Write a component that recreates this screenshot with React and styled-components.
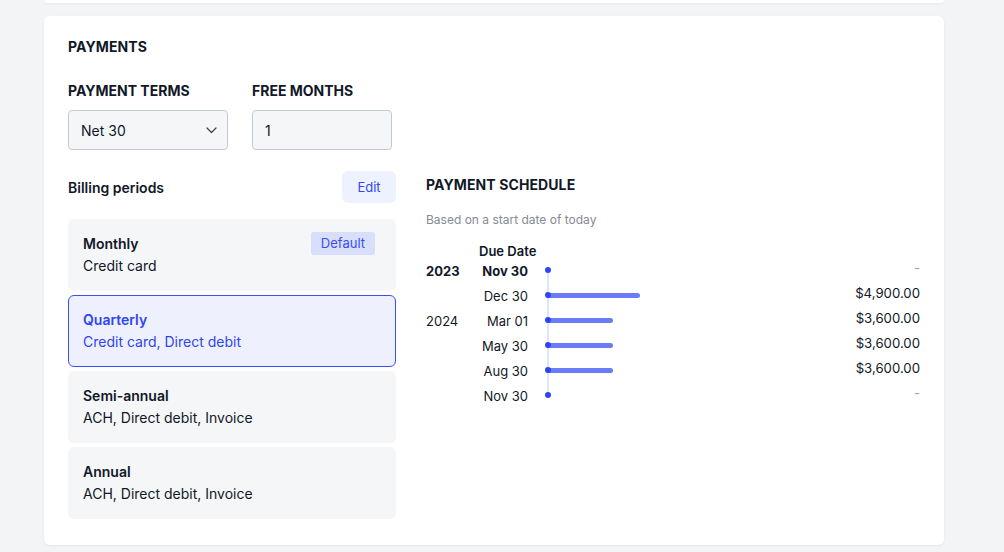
import React from 'react';
import styled, { createGlobalStyle } from 'styled-components';

const periods = [
  { name: 'Monthly', methods: 'Credit card', isDefault: true },
  { name: 'Quarterly', methods: 'Credit card, Direct debit', selected: true },
  { name: 'Semi-annual', methods: 'ACH, Direct debit, Invoice' },
  { name: 'Annual', methods: 'ACH, Direct debit, Invoice' },
];

const schedule = [
  { year: '2023', date: 'Nov 30', amount: null, bold: true },
  { date: 'Dec 30', amount: '$4,900.00', bar: 94 },
  { year: '2024', date: 'Mar 01', amount: '$3,600.00', bar: 67 },
  { date: 'May 30', amount: '$3,600.00', bar: 67 },
  { date: 'Aug 30', amount: '$3,600.00', bar: 67 },
  { date: 'Nov 30', amount: null },
];

export default function App() {
  return (
    <>
      <GlobalStyle />
      <Page>
        <PrevCard />
        <Card>
          <Title>PAYMENTS</Title>
          <Fields>
            <Field>
              <Label>PAYMENT TERMS</Label>
              <Select $width={160}>
                <span>Net 30</span>
                <svg width="13" height="12" viewBox="0 0 13 12" fill="none">
                  <path d="M2 4l4.5 4.5L11 4" stroke="#374151" strokeWidth="1.2" strokeLinecap="round" strokeLinejoin="round" />
                </svg>
              </Select>
            </Field>
            <Field>
              <Label>FREE MONTHS</Label>
              <Select $width={140}>
                <span>1</span>
              </Select>
            </Field>
          </Fields>
          <Columns>
            <Left>
              <ListHeader>
                <Subtitle>Billing periods</Subtitle>
                <EditButton>Edit</EditButton>
              </ListHeader>
              <PeriodList>
                {periods.map((p) => (
                  <Period key={p.name} $selected={p.selected}>
                    <PeriodTop>
                      <PeriodName>{p.name}</PeriodName>
                      {p.isDefault && <Badge>Default</Badge>}
                    </PeriodTop>
                    <PeriodMethods>{p.methods}</PeriodMethods>
                  </Period>
                ))}
              </PeriodList>
            </Left>
            <Right>
              <Title as="h3" $tall>PAYMENT SCHEDULE</Title>
              <Note>Based on a start date of today</Note>
              <DueHeader>Due Date</DueHeader>
              <Rows>
                {schedule.map((r, i) => (
                  <Row key={i}>
                    <Year $bold={r.bold}>{r.year}</Year>
                    <DateCell $bold={r.bold}>{r.date}</DateCell>
                    <Chart $first={i === 0} $last={i === schedule.length - 1}>
                      {r.bar && <Bar style={{ width: r.bar }} />}
                      <Dot />
                    </Chart>
                    <Amount $empty={!r.amount}>{r.amount || '-'}</Amount>
                  </Row>
                ))}
              </Rows>
            </Right>
          </Columns>
        </Card>
      </Page>
    </>
  );
}

const GlobalStyle = createGlobalStyle`
  body {
    margin: 0;
    background: #f3f4f6;
    font-family: Inter, "Noto Sans", sans-serif;
    color: #111827;
  }
`;

const Page = styled.div`
  display: flex;
  flex-direction: column;
  gap: 13px;
  padding: 0 60px 7px 44px;
  width: 900px;
`;

const PrevCard = styled.div`
  height: 3px;
  background: #fff;
  border-radius: 0 0 6px 6px;
  box-shadow: 0 1px 3px rgba(0, 0, 0, 0.05);
`;

const Card = styled.div`
  height: 529px;
  box-sizing: border-box;
  background: #fff;
  border-radius: 6px;
  box-shadow: 0 1px 3px rgba(0, 0, 0, 0.06);
  padding: 24px;
`;

const Title = styled.h2`
  margin: 0;
  font-size: 14px;
  font-weight: 700;
  line-height: ${(p) => (p.$tall ? '28px' : '14px')};
  letter-spacing: 0.1px;
`;

const Fields = styled.div`
  display: flex;
  gap: 24px;
  margin-top: 29px;
`;

const Field = styled.div`
  display: flex;
  flex-direction: column;
  gap: 11px;
`;

const Label = styled.label`
  font-size: 14px;
  font-weight: 700;
  line-height: 16px;
`;

const Select = styled.div`
  width: ${(p) => p.$width}px;
  height: 40px;
  box-sizing: border-box;
  display: flex;
  align-items: center;
  justify-content: space-between;
  padding: 0 9px 0 12px;
  background: #f5f6f8;
  border: 1px solid #c4cad3;
  border-radius: 4px;
  font-size: 14px;
  color: #111827;
`;

const Columns = styled.div`
  display: grid;
  grid-template-columns: 328px 1fr;
  column-gap: 30px;
  margin-top: 21px;
`;

const Left = styled.div`
  display: flex;
  flex-direction: column;
  gap: 16px;
`;

const ListHeader = styled.div`
  display: flex;
  align-items: center;
  justify-content: space-between;
  height: 32px;
`;

const Subtitle = styled.span`
  font-size: 14px;
  font-weight: 600;
`;

const EditButton = styled.button`
  height: 32px;
  width: 54px;
  border: none;
  border-radius: 6px;
  background: #eef1fe;
  color: #3447f0;
  font-family: inherit;
  font-size: 13px;
`;

const PeriodList = styled.div`
  display: flex;
  flex-direction: column;
  gap: 4px;
`;

const Period = styled.div`
  height: 72px;
  box-sizing: border-box;
  padding: 13px 20px 0 14px;
  border-radius: 6px;
  border: 1px solid ${(p) => (p.$selected ? '#3a4ff1' : 'transparent')};
  background: ${(p) => (p.$selected ? '#eef1fd' : '#f5f6f8')};
  color: ${(p) => (p.$selected ? '#2f45ef' : '#111827')};
`;

const PeriodTop = styled.div`
  display: flex;
  align-items: center;
  justify-content: space-between;
  height: 20px;
`;

const PeriodName = styled.span`
  font-size: 14px;
  font-weight: 600;
`;

const Badge = styled.span`
  height: 23px;
  line-height: 23px;
  padding: 0 10px;
  border-radius: 3px;
  background: #d9defb;
  color: #3a4ff0;
  font-size: 13px;
`;

const PeriodMethods = styled.div`
  margin-top: 3px;
  font-size: 14px;
  line-height: 20px;
`;

const Right = styled.div`
  display: flex;
  flex-direction: column;
`;

const Note = styled.div`
  margin-top: 13px;
  font-size: 12px;
  line-height: 16px;
  color: #858b94;
`;

const DueHeader = styled.div`
  margin-top: 16px;
  padding-left: 53px;
  font-size: 13px;
  font-weight: 600;
  line-height: 14px;
`;

const Rows = styled.div`
  display: flex;
  flex-direction: column;
`;

const Row = styled.div`
  display: grid;
  grid-template-columns: 53px 49px 1fr auto;
  align-items: center;
  height: 25px;
  font-size: 13px;
`;

const Year = styled.span`
  font-weight: ${(p) => (p.$bold ? 700 : 400)};
`;

const DateCell = styled.span`
  text-align: right;
  font-weight: ${(p) => (p.$bold ? 700 : 400)};
`;

const Chart = styled.div`
  position: relative;
  height: 25px;
  margin-left: 17px;

  &::before {
    content: '';
    position: absolute;
    left: 2px;
    width: 2px;
    top: ${(p) => (p.$first ? '12px' : '0')};
    bottom: ${(p) => (p.$last ? '12px' : '0')};
    background: #dfe3fb;
  }
`;

const Dot = styled.span`
  position: absolute;
  left: 0;
  top: 9px;
  width: 6px;
  height: 6px;
  border-radius: 50%;
  background: #2f44f5;
`;

const Bar = styled.span`
  position: absolute;
  left: 1px;
  top: 10px;
  height: 5px;
  border-radius: 3px;
  background: #6a7df7;
`;

const Amount = styled.span`
  text-align: right;
  font-size: 13.2px;
  color: ${(p) => (p.$empty ? '#9ca3af' : '#111827')};
  transform: translateY(-3px);
`;
